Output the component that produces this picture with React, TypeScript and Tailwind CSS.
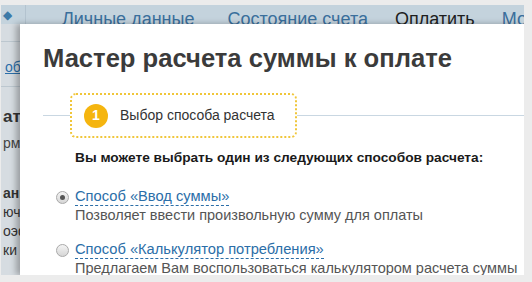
const LINK = "#2b6ea8";

function Radio({ checked }: { checked?: boolean }) {
  return (
    <span className="mt-[4px] flex h-[13px] w-[13px] shrink-0 items-center justify-center rounded-full border border-[#a9a9a9] bg-gradient-to-b from-[#f4f4f4] to-[#d6d6d6]">
      {checked && <span className="h-[5px] w-[5px] rounded-full bg-[#555]" />}
    </span>
  );
}

function Option({ title, text, checked }: { title: string; text: string; checked?: boolean }) {
  return (
    <div className="flex items-start gap-[6px]">
      <Radio checked={checked} />
      <div className="flex flex-col">
        <span
          className="self-start border-b border-dashed border-[#2b6ea8] text-[14.7px] leading-[18px]"
          style={{ color: LINK }}
        >
          {title}
        </span>
        <span className="text-[14.5px] leading-[18px] text-[#555] whitespace-nowrap">{text}</span>
      </div>
    </div>
  );
}

export default function App() {
  return (
    <div className="h-[282px] w-[532px] overflow-hidden bg-[#ececec] pt-[5px] pr-[8px] pb-[7px] pl-[1px] font-['Liberation_Sans',Arial,sans-serif]">
      <div className="relative h-full w-full overflow-hidden bg-[#d6dce1]">
        {/* page behind the dialog */}
        <div className="flex h-[19px] items-start bg-[#c4d3dd]">
          <div className="flex h-full w-[25px] shrink-0 items-center border-r border-[#b3c3cf] pl-[2px] text-[12px] text-[#3d7aa8]">
            ◆
          </div>
          <div className="flex shrink-0 items-start pl-[36px] pt-[4px] text-[18px] leading-[20px] text-[#3a6f9c] whitespace-nowrap">
            <span>Личные данные</span>
            <span className="ml-[33px]">Состояние счета</span>
            <span className="ml-[27px] text-[#1e1e1e]">Оплатить</span>
            <span className="ml-[27px]">Мои</span>
          </div>
        </div>
        <div className="flex w-[19px] flex-col overflow-hidden text-[14px] text-[#333] whitespace-nowrap">
          <div className="h-[18px] border-b border-[#bcc7cf]" />
          <div className="flex h-[45px] items-center border-b border-[#bcc7cf] pl-[4px] pt-[6px]">
            <span className="underline" style={{ color: LINK }}>обновить</span>
          </div>
          <div className="flex flex-col pl-[2px] pt-[19px]">
            <span className="text-[17px] font-bold leading-[22px]">атизация</span>
            <span className="pt-[4px] leading-[22px] text-[#444]">рмация</span>
          </div>
          <div className="flex flex-col pl-[2px] pt-[30px] leading-[19px]">
            <span className="font-bold">анные</span>
            <span>ючение</span>
            <span>оэффициент</span>
            <span>ки</span>
          </div>
        </div>

        {/* dialog */}
        <div className="absolute top-[19px] right-0 bottom-0 left-[19px] bg-white shadow-[-4px_0_6px_rgba(0,0,0,0.28)]">
          <h1 className="pt-[20px] pl-[23px] text-[25.6px] font-bold leading-[28px] text-[#3b3b3b] whitespace-nowrap">
            Мастер расчета суммы к оплате
          </h1>

          <div className="mt-[21px] flex items-center pl-[23px]">
            <div className="h-px w-[27px] bg-[#c9d7e2]" />
            <div className="flex h-[45px] w-[227px] items-center gap-[12px] rounded-[6px] border-2 border-dotted border-[#f0c63a] pl-[12px]">
              <span className="flex h-[24px] w-[24px] items-center justify-center rounded-full bg-[#f5b50f] text-[14px] font-bold text-white">
                1
              </span>
              <span className="text-[14px] text-[#333]">Выбор способа расчета</span>
            </div>
            <div className="h-px flex-1 bg-[#c9d7e2]" />
          </div>

          <p className="mt-[12px] pl-[55px] text-[13.7px] font-bold leading-[16px] text-[#1a1a1a] whitespace-nowrap">
            Вы можете выбрать один из следующих способов расчета:
          </p>

          <div className="mt-[21px] flex flex-col gap-[16px] pl-[36px]">
            <Option checked title="Способ «Ввод суммы»" text="Позволяет ввести произвольную сумму для оплаты" />
            <Option
              title="Способ «Калькулятор потребления»"
              text="Предлагаем Вам воспользоваться калькулятором расчета суммы"
            />
          </div>
        </div>
      </div>
    </div>
  );
}
